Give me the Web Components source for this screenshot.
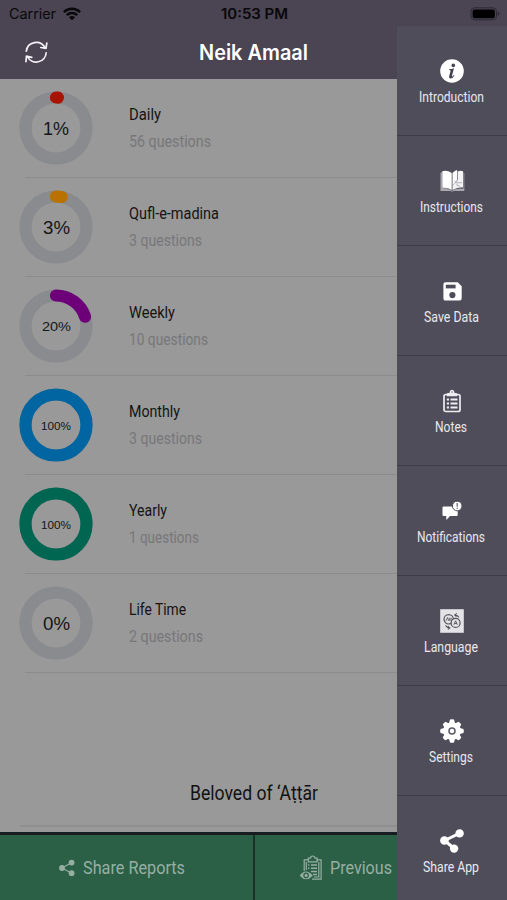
<!DOCTYPE html>
<html lang="en">
<head>
<meta charset="utf-8">
<title>Neik Amaal</title>
<style>
html,body{margin:0;height:100%;overflow:hidden;background:#999}
</style>
</head>
<body>
<neik-app></neik-app>
<script>
const attach = (el, html) => { el.attachShadow({mode:'open'}).innerHTML = html; return el.shadowRoot; };

// A single line of text condensed or widened to a given width.
customElements.define('fit-text', class extends HTMLElement {
  connectedCallback(){
    if (this.shadowRoot) return;
    const w = +this.getAttribute('w');
    const root = attach(this, `<style>:host{display:block;flex:none;width:${w}px;white-space:nowrap}
      span{display:inline-block;transform-origin:0 50%}</style><span><slot></slot></span>`);
    const span = root.querySelector('span');
    span.style.transform = `scaleX(${w / span.getBoundingClientRect().width})`;
  }
});

customElements.define('status-bar', class extends HTMLElement {
  connectedCallback(){
    attach(this, `<style>
      :host{display:grid;grid-template-columns:1fr auto 1fr;align-items:center;height:26px;padding:1px 7px 0 9px;box-sizing:border-box;color:#09080b;font:14px/24px Inter,sans-serif}
      .l{display:flex;gap:7px;align-items:center}.r{justify-self:end;display:flex}
      .t{font-weight:600}
    </style>
    <div class="l"><fit-text w="47">Carrier</fit-text>
      <svg width="18" height="14" viewBox="0 0 18 14" fill="none" stroke="#09080b"><path d="M.9 5.1a11.6 11.6 0 0 1 16.2 0" stroke-width="2.5"/><path d="M3.8 8.1a7.5 7.5 0 0 1 10.4 0" stroke-width="2.3"/><path d="M9 13.2 5.9 10.2a4.4 4.4 0 0 1 6.2 0z" fill="#09080b" stroke="none"/></svg></div>
    <fit-text class="t" w="67">10:53 PM</fit-text>
    <div class="r"><svg width="30" height="14" viewBox="0 0 30 14"><rect x="1" y=".8" width="25.5" height="12" rx="3.6" fill="none" stroke="#2d2833"/><rect x="2.6" y="2.4" width="22.3" height="8.8" rx="2" fill="#000"/><path d="M27.8 4.6q1.7.6 1.7 2.2t-1.7 2.2z" fill="#2d2833"/></svg></div>`);
  }
});

customElements.define('nav-bar', class extends HTMLElement {
  connectedCallback(){
    attach(this, `<style>
      :host{display:grid;grid-template-columns:1fr auto 1fr;align-items:center;height:53px;padding:0 24px;color:#fff;font:600 21px/30px Inter,sans-serif}
      svg{margin-bottom:2px}
    </style>
    <svg width="24" height="24" viewBox="0 0 24 24" fill="none" stroke="#f3f2f6" stroke-width="1.7" stroke-linecap="round" stroke-linejoin="round"><path d="M2.3 11.2A10 10 0 0 1 21 7.6M22.8 3.2 22 8.4l-5.2-.9"/><path d="M22.2 12.8A10 10 0 0 1 3.5 16.9M2 21.6l.4-5.4 5.4 1.2"/></svg>
    <fit-text w="109"><slot></slot></fit-text><i></i>`);
  }
});

customElements.define('progress-ring', class extends HTMLElement {
  connectedCallback(){
    const v = +this.getAttribute('value'), C = 2*Math.PI*30.5;
    const full = v === 100, arc = v/100*C;
    attach(this, `<style>
      :host{display:grid;width:74px;height:74px;place-items:center;color:#151515;font:${this.getAttribute('fs')}px/24px "Liberation Sans",sans-serif}
      svg,fit-text{grid-area:1/1}fit-text{margin-top:2px}
    </style>
    <svg width="74" height="74" viewBox="0 0 74 74" fill="none" stroke-width="12.2"><circle cx="37" cy="37" r="30.5" stroke="#8a8b8f"/>
    ${v ? `<circle cx="37" cy="37" r="30.5" stroke="${this.getAttribute('color')}" transform="rotate(-90 37 37)" ${full ? '' : `stroke-linecap="round" stroke-dasharray="${arc} 400"`}/>` : ''}</svg>
    <fit-text w="${this.getAttribute('tw')}">${v}%</fit-text>`);
  }
});

customElements.define('question-row', class extends HTMLElement {
  connectedCallback(){
    const a = n => this.getAttribute(n);
    attach(this, `<style>
      :host{display:flex;flex:none;height:99px;box-sizing:border-box;padding-left:19px;gap:36px;background:linear-gradient(#8c8c8e,#8c8c8e) 25px 100%/100% 1px no-repeat}
      progress-ring{margin-top:11.5px}
      .t{display:flex;flex-direction:column;padding-top:24px;gap:3px;font:16.5px/24px Roboto,sans-serif;color:#141414}
      .q{color:#777779}
    </style>
    <progress-ring value="${a('value')}" color="${a('color')}" fs="${a('fs')}" tw="${a('tw')}"></progress-ring>
    <div class="t"><fit-text w="${a('w1')}">${a('name')}</fit-text><fit-text class="q" w="${a('w2')}">${a('count')} questions</fit-text></div>`);
  }
});

customElements.define('drawer-item', class extends HTMLElement {
  connectedCallback(){
    attach(this, `<style>
      :host{display:flex;flex:none;flex-direction:column;align-items:center;height:110px;box-sizing:border-box;padding-top:32px;gap:3px;border-bottom:1px solid #3e3b49;color:#e9e8ee;font:14.2px/20px Roboto,sans-serif}
      :host(:last-child){border:0}
      .i{display:grid;place-items:center;width:26px;height:26px}
      fit-text{margin-right:2px}
    </style><div class="i"><slot name="icon"></slot></div><fit-text w="${this.getAttribute('w')}">${this.getAttribute('label')}</fit-text>`);
  }
});

customElements.define('side-drawer', class extends HTMLElement {
  connectedCallback(){
    attach(this, `<style>
      :host{display:flex;flex-direction:column;position:absolute;left:397px;top:26px;width:110px;height:874px;background:#504d5b;box-sizing:border-box}
    </style>
    <drawer-item label="Introduction" w="65"><svg slot="icon" width="24" height="24" viewBox="0 0 24 24"><circle cx="12" cy="12" r="11.8" fill="#fff"/><g fill="#454250"><circle cx="13.3" cy="6.4" r="1.8"/><path d="M9.2 10.2q2.6-.2 4.8-1l-1.9 7q-.3 1.4.4 1.2.7-.3 1.4-1.3l.6.4q-1.6 2.9-3.8 2.9-2.1-.1-1.5-2.4l1.3-4.7q.3-1.2-1.5-1.3z"/></g></svg></drawer-item>
    <drawer-item label="Instructions" w="63"><svg slot="icon" width="26" height="24" viewBox="0 0 26 24"><path d="M1.5 4 3 2.7V19q5-.3 9 2.2l1 .5q2-1.5 6-2l5.6-.2V3.2l.7.8v18H14.5l-1.5.8-1.5-.8h-10z" fill="#aaa8ae"/><path d="M3.3 2.2Q8 .6 12.7 4.1v17Q8.6 18.2 3.3 18.8z" fill="#fff"/><path d="M13.5 4.1q2.2-2.5 4.6-3.1v10l-4.6 6z" fill="#fff"/><path d="M18.7 2.4q2.4-1 5.4-.2v16.2q-5.6-.3-10.6 2.7v-4l5.2-6.2z" fill="#f3f3f4"/><path d="M15.5 12.3l2.6 1.4h5M18 14.5v2l3 .5" fill="none" stroke="#a3a1a9" stroke-width=".8"/></svg></drawer-item>
    <drawer-item label="Save Data" w="55"><svg slot="icon" width="19" height="19" viewBox="0 0 19 19"><path d="M2.5.3h12.2l4 4v12q0 2.3-2.3 2.3H2.5Q.4 18.6.4 16.4V2.5Q.4.3 2.5.3z" fill="#fff"/><path d="M2.8 2.7h9.8v3.7H2.8z" fill="#504d5b"/><circle cx="9.4" cy="13.1" r="3.1" fill="#504d5b"/></svg></drawer-item>
    <drawer-item label="Notes" w="32"><svg slot="icon" width="18" height="24" viewBox="0 0 18 24"><rect x="1" y="5.5" width="16" height="17" rx="1.8" fill="none" stroke="#eeedf2" stroke-width="1.7"/><path d="M3.7 7.3V5.2q0-1.2 1.4-1.2h1.3Q7 .8 9 .8T11.6 4h1.3q1.4 0 1.4 1.2v2.1z" fill="#eeedf2"/><circle cx="9" cy="3" r=".8" fill="#777480"/><path d="M3.8 10.5H6m-2.2 4H6m-2.2 4H6m1.5-8h7m-7 4h7m-7 4h7" stroke="#eeedf2" stroke-width="1.9"/></svg></drawer-item>
    <drawer-item label="Notifications" w="68"><svg slot="icon" width="20" height="20" viewBox="0 0 20 20"><path d="M1.6 5.5h14.1v8.3q0 1.2-1.2 1.2H8l-3.7 4V15H1.6Q.5 15 .5 13.8V6.6q0-1.1 1.1-1.1z" fill="#fff"/><circle cx="15.2" cy="5" r="4.8" fill="#fff" stroke="#504d5b" stroke-width="1"/><path d="M15.2 2.1v3.6m0 1v1.3" stroke="#65616f" stroke-width="1.2"/></svg></drawer-item>
    <drawer-item label="Language" w="54"><svg slot="icon" width="24" height="24" viewBox="0 0 24 24"><path fill="#e4e3e6" d="M.2.2h23.6v23.6H.2z"/><g fill="none" stroke="#55535a"><circle cx="8.7" cy="10.3" r="4.7" stroke-width="1.2"/><circle cx="15.6" cy="13.9" r="4.5" stroke-width="1.2" fill="#e4e3e6"/><path d="M6 11.8l1.6-3.3 1.2 3.3m1-3v3m1.3-3v3M13.8 15.8l1.8-4 1.8 4m-3-1.3h2.4" stroke-width=".9"/><path d="M19 8.6q-1.2-2.4-4-2.6m1.8-1.6L14.7 6l1.8 1.6M5.5 16.3q1.2 2.4 4 2.6m-1.7-1.7 2 1.7-1.8 1.5" stroke-width="1.1"/></g></svg></drawer-item>
    <drawer-item label="Settings" w="44"><svg slot="icon" width="24" height="24" viewBox="0 0 24 24"><g fill="#fff"><circle cx="12" cy="12" r="8.8"/><path d="M10 .6q2-.8 4 0l1.2 4.4H8.8zM10 23.4q2 .8 4 0l1.2-4.4H8.8zM.6 10q-.8 2 0 4L5 15.2V8.8zM23.4 10q.8 2 0 4L19 15.2V8.8z"/><path transform="rotate(45 12 12)" d="M10 .9q2-.8 4 0l1.2 4.1H8.8zM10 23.1q2 .8 4 0l1.2-4.1H8.8zM.9 10q-.8 2 0 4L5 15.2V8.8zM23.1 10q.8 2 0 4L19 15.2V8.8z"/></g><circle cx="12" cy="12" r="3" fill="#fff" stroke="#5b5866" stroke-width="1.5"/></svg></drawer-item>
    <drawer-item label="Share App" w="56"><svg slot="icon" width="24" height="24" viewBox="0 0 24 24"><path d="M19.4 4.3 4.6 11.5l9.6 8" fill="none" stroke="#fff" stroke-width="3"/><g fill="#fff"><circle cx="19.6" cy="4.4" r="4.2"/><circle cx="4.4" cy="11.5" r="4.3"/><circle cx="14.1" cy="19.6" r="4.2"/></g></svg></drawer-item>`);
  }
});

customElements.define('bottom-bar', class extends HTMLElement {
  connectedCallback(){
    attach(this, `<style>
      :host{display:grid;grid-template-columns:253px 1fr;column-gap:2px;height:68px;box-sizing:border-box;border-top:3px solid #171c21;background:#193127}
      div{display:flex;align-items:center;background:#2b6046;font:19px/28px Roboto,sans-serif;color:#98aea3}
      .a{padding-left:59px;gap:8px}.b{padding-left:45px;gap:8px}
    </style>
    <div class="a"><svg width="16" height="18" viewBox="0 0 16 18"><path d="M12.7 3.5 3 9l9.7 5.3" fill="none" stroke="#98aea3" stroke-width="1.1"/><g fill="#98aea3"><circle cx="12.6" cy="3.6" r="2.9"/><circle cx="3" cy="9" r="2.9"/><circle cx="12.6" cy="14.2" r="2.9"/></g></svg><fit-text w="102">Share Reports</fit-text></div>
    <div class="b"><svg width="22" height="26" viewBox="0 0 22 26" fill="none" stroke="#98aea3" stroke-width="1.2"><path d="M4.2 16V4.8h4.1V3.2h2.2Q10.6 1 12.7 1T15 3.2h2.1v1.6h4v19.4H12"/><path d="M8.3 4.8v2.1h8.8V4.8M18.8 7v15h-5M6.3 15V7"/><path d="M11 10h6m-6 3.2h6m-6 3.2h6m-4 3h4M8 10h1.3M8 13.2h1.3" stroke-width="1.5"/><path d="M.5 20.5q5.2-7 11.4 0-5.7 6.3-11.4 0z" fill="#98aea3"/><circle cx="6.1" cy="20.4" r="2.2" fill="#98aea3" stroke="#2b6046"/></svg><fit-text w="62">Previous</fit-text></div>`);
  }
});

customElements.define('neik-app', class extends HTMLElement {
  connectedCallback(){
    attach(this, `<style>
      :host{display:flex;flex-direction:column;position:relative;width:507px;height:900px;overflow:hidden;background:#999}
      header{background:#4a4453;flex:none}
      main{flex:1;display:flex;flex-direction:column}
      footer{margin-top:auto;height:58px;margin-bottom:5px;margin-left:20px;padding-right:20px;box-sizing:border-box;border-bottom:2px solid #8f8f91;display:flex;justify-content:center;color:#111;font:20.5px/28px Roboto,sans-serif;padding-top:10px}
    </style>
    <header><status-bar></status-bar><nav-bar>Neik Amaal</nav-bar></header>
    <main>
      <question-row name="Daily" count="56" value="1" color="#a81302" fs="18" tw="26" w1="32" w2="82"></question-row>
      <question-row name="Qufl-e-madina" count="3" value="3" color="#b97200" fs="18" tw="27" w1="90" w2="73"></question-row>
      <question-row name="Weekly" count="10" value="20" color="#6d0078" fs="13.5" tw="29" w1="46" w2="79"></question-row>
      <question-row name="Monthly" count="3" value="100" color="#0065a0" fs="11" tw="30" w1="51" w2="73"></question-row>
      <question-row name="Yearly" count="1" value="100" color="#006652" fs="11" tw="30" w1="38" w2="70"></question-row>
      <question-row name="Life Time" count="2" value="0" color="" fs="18" tw="27" w1="57" w2="74"></question-row>
      <footer><fit-text w="128">Beloved of ‘Aṭṭār</fit-text></footer>
    </main>
    <bottom-bar></bottom-bar>
    <side-drawer></side-drawer>`);
  }
});
</script>
</body>
</html>
